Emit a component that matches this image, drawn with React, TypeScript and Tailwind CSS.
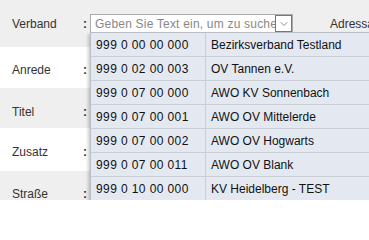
import { ChevronDown } from 'lucide-react';

const options = [
  { code: '999 0 00 00 000', name: 'Bezirksverband Testland' },
  { code: '999 0 02 00 003', name: 'OV Tannen e.V.' },
  { code: '999 0 07 00 000', name: 'AWO KV Sonnenbach' },
  { code: '999 0 07 00 001', name: 'AWO OV Mittelerde' },
  { code: '999 0 07 00 002', name: 'AWO OV Hogwarts' },
  { code: '999 0 07 00 011', name: 'AWO OV Blank' },
  { code: '999 0 10 00 000', name: 'KV Heidelberg - TEST' },
];

function Label({ text }: { text: string }) {
  return (
    <>
      <span className="w-[71px] shrink-0 text-[#333]">{text}</span>
      <span className="w-[7px] shrink-0 font-bold text-[#333]">:</span>
    </>
  );
}

export default function App() {
  return (
    <div
      className="relative w-[369px] h-[200px] overflow-hidden bg-white text-[12px]"
      style={{ fontFamily: '"Liberation Sans", Arial, sans-serif' }}
    >
      {/* Verband */}
      <div className="flex items-center h-[47px] pl-3 bg-[#efefef]">
        <Label text="Verband" />
        <div className="flex shrink-0 items-center w-[203px] h-[19px] bg-white border border-[#aaa] pl-[4px]">
          <span className="flex-1 min-w-0 overflow-hidden whitespace-nowrap text-[#888] tracking-[0.2px]">
            Geben Sie Text ein, um zu suchen
          </span>
          <span className="flex shrink-0 items-center justify-center w-[17px] h-[17px] border border-[#777] bg-white">
            <ChevronDown className="w-3 h-3 text-[#666]" strokeWidth={1.5} />
          </span>
        </div>
        <span className="ml-[37px] shrink-0 text-[#333] whitespace-nowrap">Adressa</span>
      </div>

      {/* Anrede */}
      <div className="flex items-center h-[41px] pt-[5px] pl-3 bg-white">
        <Label text="Anrede" />
      </div>

      {/* Titel */}
      <div className="flex items-center h-[40px] pt-[7px] pl-3 bg-[#efefef]">
        <Label text="Titel" />
      </div>

      {/* Zusatz */}
      <div className="flex items-center h-[43px] pt-[5px] pl-3 bg-white">
        <Label text="Zusatz" />
      </div>

      {/* Straße */}
      <div className="flex items-center h-[42px] pt-[4px] pl-3 bg-[#efefef]">
        <Label text="Straße" />
      </div>

      {/* Suggestion list */}
      <div className="absolute left-[90px] top-[32px] w-[300px] border-t border-l border-[#b9bdc4] bg-[#e4e9f1] shadow-[-2px_2px_3px_rgba(0,0,0,0.2)]">
        {options.map((o) => (
          <div key={o.code} className="flex h-[24px] border-b border-[#c9cdd4] text-[#111]">
            <span className="flex shrink-0 items-center w-[115px] pl-[5px] border-r border-[#c9cdd4] tracking-[0.4px] whitespace-nowrap">
              {o.code}
            </span>
            <span className="flex items-center pl-[5px] whitespace-nowrap">{o.name}</span>
          </div>
        ))}
      </div>
    </div>
  );
}
